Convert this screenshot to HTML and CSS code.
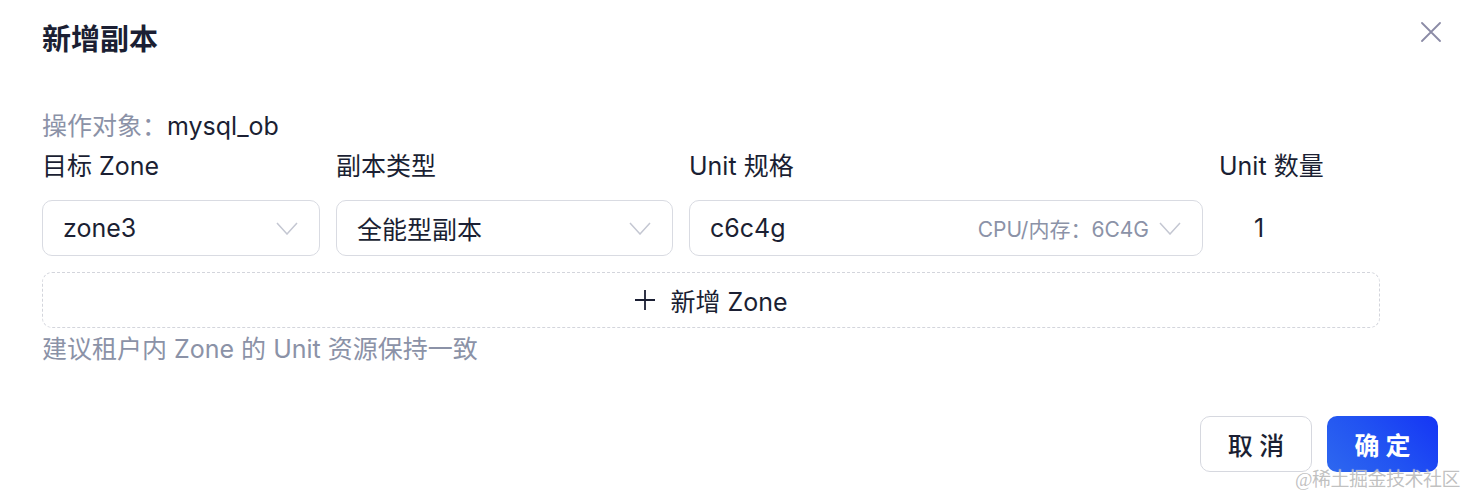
FILE: index.html
```html
<!DOCTYPE html>
<html lang="zh-CN">
<head>
<meta charset="utf-8">
<title>新增副本</title>
<link rel="stylesheet" href="styles.css">
</head>
<body>
<div class="modal">
  <div class="modal-header">
    <h1 class="modal-title">新增副本</h1>
    <button class="close-btn" aria-label="关闭">
      <svg width="20" height="20" viewBox="0 0 20 20"><path d="M1 1 L19 19 M19 1 L1 19" stroke="#8b8ba6" stroke-width="1.8" fill="none" stroke-linecap="round"/></svg>
    </button>
  </div>
  <div class="modal-body">
    <div class="target-line"><span class="muted">操作对象：</span>mysql_ob</div>
    <div class="zone-grid">
      <div class="col-label">目标 Zone</div>
      <div class="col-label">副本类型</div>
      <div class="col-label">Unit 规格</div>
      <div class="col-label">Unit 数量</div>

      <div class="select"><span class="select-value">zone3</span><span class="select-extra"></span><svg class="arrow" width="22" height="13" viewBox="0 0 22 13"><path d="M1 1 L11 12 L21 1" stroke="#c4c7d2" stroke-width="1.5" fill="none"/></svg></div>
      <div class="select"><span class="select-value">全能型副本</span><span class="select-extra"></span><svg class="arrow" width="22" height="13" viewBox="0 0 22 13"><path d="M1 1 L11 12 L21 1" stroke="#c4c7d2" stroke-width="1.5" fill="none"/></svg></div>
      <div class="select"><span class="select-value">c6c4g</span><span class="select-extra">CPU/内存：6C4G</span><svg class="arrow" width="22" height="13" viewBox="0 0 22 13"><path d="M1 1 L11 12 L21 1" stroke="#c4c7d2" stroke-width="1.5" fill="none"/></svg></div>
      <div class="count">1</div>
    </div>
    <button class="add-zone">
      <svg width="22" height="22" viewBox="0 0 22 22"><path d="M11 1 V21 M1 11 H21" stroke="#1b1f33" stroke-width="1.8" fill="none"/></svg>
      <span>新增 Zone</span>
    </button>
    <div class="hint">建议租户内 Zone 的 Unit 资源保持一致</div>
  </div>
  <div class="modal-footer">
    <button class="btn btn-default">取 消</button>
    <button class="btn btn-primary">确 定</button>
  </div>
  <div class="watermark">@稀土掘金技术社区</div>
</div>
</body>
</html>
```
FILE: styles.css
```css
* { box-sizing: border-box; }
html, body { margin: 0; padding: 0; background: #ffffff; }
body {
  font-family: "Inter", "Noto Sans CJK SC", sans-serif;
  color: #1b1f33;
  font-size: 25px;
}
.modal {
  position: relative;
  width: 1466px;
  height: 494px;
  padding: 0 28px 0 42px;
}
.modal-header {
  display: flex;
  align-items: center;
  justify-content: space-between;
  padding-top: 20px;
  height: 60px;
}
.modal-title {
  margin: 0;
  font-size: 29px;
  line-height: 40px;
  font-weight: 700;
  color: #1b1f33;
}
.close-btn {
  border: 0;
  background: none;
  padding: 0;
  width: 20px;
  height: 20px;
  margin-right: -3px;
  margin-top: -17px;
  display: flex;
}
.modal-body {
  padding-top: 46px;
}
.target-line {
  line-height: 40px;
  height: 40px;
}
.muted { color: #8b92a7; }
.zone-grid {
  display: grid;
  grid-template-columns: 278px 337px 514px 161px;
  column-gap: 16px;
  width: 1338px;
}
.col-label {
  line-height: 40px;
  height: 54px;
  padding-bottom: 14px;
}
.select {
  height: 56px;
  border: 1px solid #d9dbe2;
  border-radius: 10px;
  display: flex;
  align-items: center;
  padding: 0 21px 0 20px;
}
.select-value { flex: 0 0 auto; }
.select-extra {
  flex: 1 1 auto;
  text-align: right;
  color: #8b92a7;
  font-size: 21px;
  padding-right: 10px;
}
.arrow { flex: 0 0 auto; }
.count {
  display: flex;
  align-items: center;
  padding-left: 35px;
}
.add-zone {
  margin-top: 16px;
  width: 1338px;
  height: 56px;
  border: 1px dashed #d3d5dc;
  border-radius: 10px;
  background: #ffffff;
  display: flex;
  align-items: center;
  justify-content: center;
  gap: 14px;
  font-family: inherit;
  font-size: 25px;
  color: #1b1f33;
  padding: 0;
}
.hint {
  margin-top: 3px;
  line-height: 36px;
  color: #8b92a7;
}
.modal-footer {
  display: flex;
  justify-content: flex-end;
  gap: 15px;
  margin-top: 49px;
}
.btn {
  height: 56px;
  width: 112px;
  border-radius: 10px;
  font-family: inherit;
  font-size: 25px;
  font-weight: 500;
  padding: 0;
}
.btn-default {
  background: #ffffff;
  border: 1px solid #d6d8df;
  color: #1b1f33;
}
.btn-primary {
  width: 111px;
  border: 0;
  color: #ffffff;
  font-weight: 700;
  background: linear-gradient(45deg, #2e68ef 0%, #2152f2 50%, #1535f5 100%);
}
.watermark {
  position: absolute;
  right: 6px;
  bottom: 3px;
  font-family: "Liberation Serif", "Noto Sans CJK SC", serif;
  font-size: 19px;
  color: rgba(140, 140, 140, 0.55);
  text-shadow: 0 0 1px #ffffff;
  letter-spacing: -0.5px;
}
```
